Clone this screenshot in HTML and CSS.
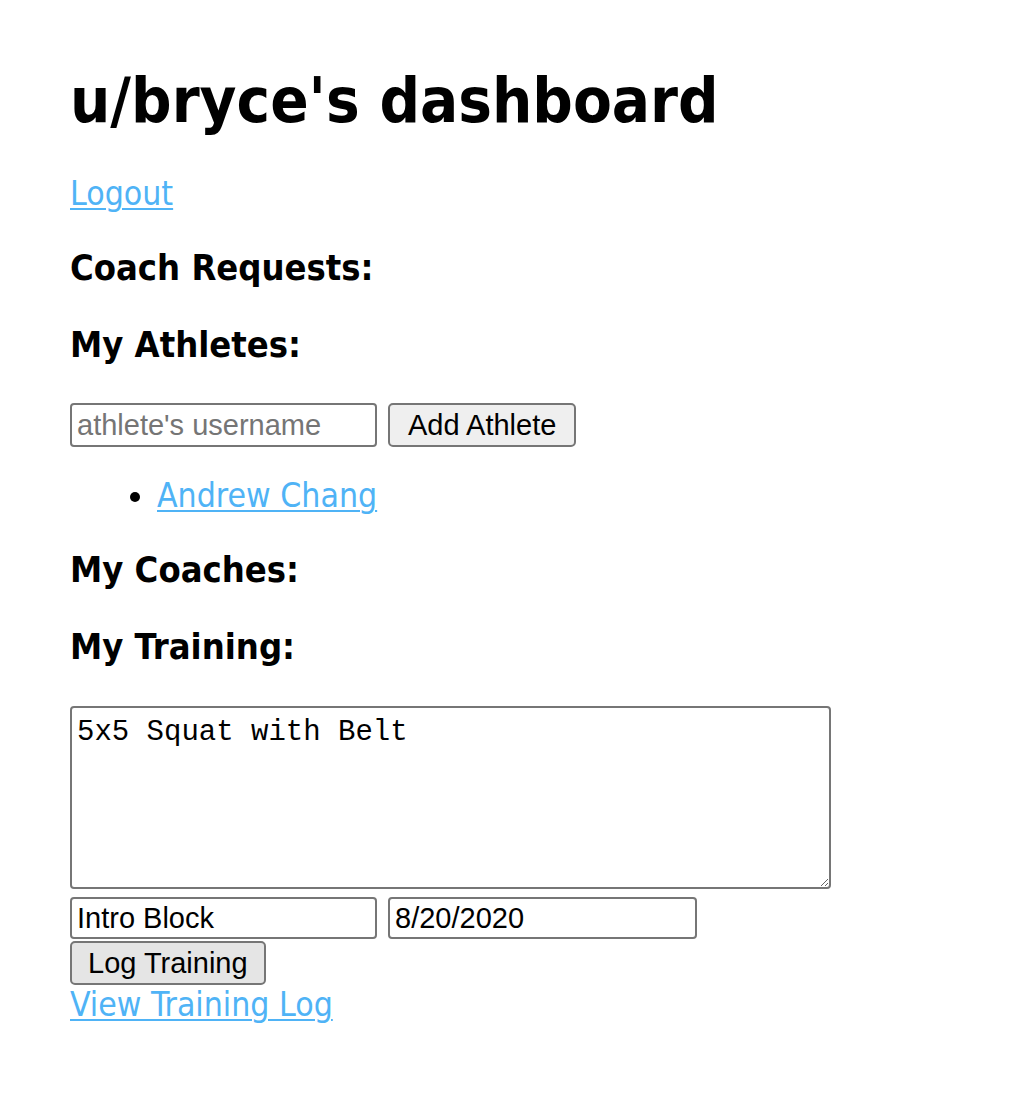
FILE: index.html
```html
<!DOCTYPE html>
<html lang="en">
<head>
<meta charset="utf-8">
<title>u/bryce's dashboard</title>
<link rel="stylesheet" href="styles.css">
</head>
<body>
<main class="page">
  <h1 class="title">u/bryce's dashboard</h1>
  <p class="text-line"><a class="link" href="#">Logout</a></p>
  <h3 class="section">Coach Requests:</h3>
  <h3 class="section">My Athletes:</h3>
  <form class="add-form">
    <input class="field field-tall" type="text" placeholder="athlete's username">
    <button class="btn" type="button">Add Athlete</button>
  </form>
  <ul class="athletes">
    <li class="text-line"><a class="link" href="#">Andrew Chang</a></li>
  </ul>
  <h3 class="section">My Coaches:</h3>
  <h3 class="section">My Training:</h3>
  <form class="training">
    <textarea class="notes">5x5 Squat with Belt</textarea>
    <div class="row">
      <input class="field field-short" type="text" value="Intro Block">
      <input class="field field-short field-date" type="text" value="8/20/2020">
    </div>
    <button class="btn btn-log" type="button">Log Training</button>
  </form>
  <p class="text-line log-line"><a class="link" href="#">View Training Log</a></p>
</main>
</body>
</html>
```

FILE: styles.css
```css
body {
  margin: 0;
  background: #fff;
  color: #000;
  font-family: "DejaVu Sans Condensed", "DejaVu Sans", sans-serif;
}

.page {
  padding: 63px 70px 0;
}

.title {
  font-size: 63px;
  line-height: 76px;
  font-weight: bold;
  margin: 0 0 35px;
}

.text-line {
  font-size: 33.5px;
  line-height: 40px;
  margin: 0 0 31px;
}

.link {
  color: #4fb3f6;
  text-decoration: underline;
  text-decoration-thickness: 2px;
  text-underline-offset: 3px;
}

.section {
  font-size: 36px;
  line-height: 46px;
  font-weight: bold;
  margin: 31px 0;
}

.add-form {
  display: flex;
  gap: 11px;
  margin: 35px 0 0;
}

.field {
  box-sizing: border-box;
  width: 307px;
  height: 42px;
  padding: 0 5px;
  border: 2px solid #767676;
  border-radius: 4px;
  background: #fff;
  color: #000;
  font-family: "Liberation Sans", Arial, sans-serif;
  font-size: 29px;
}

.field::placeholder {
  color: #757575;
}

.field-tall {
  height: 44px;
}

.field-date {
  width: 309px;
}

.btn {
  box-sizing: border-box;
  height: 44px;
  padding: 0 16px;
  border: 2px solid #767676;
  border-radius: 5px;
  background: #efefef;
  color: #000;
  font-family: "Liberation Sans", Arial, sans-serif;
  font-size: 29px;
}

.add-form .btn {
  padding: 0 18px;
}

.btn-log {
  background: #e5e5e5;
  margin-top: 2px;
}

.athletes {
  margin: 29px 0 31px;
  padding-left: 87px;
}

.athletes .text-line {
  margin: 0;
}

.training {
  display: flex;
  flex-direction: column;
  align-items: flex-start;
  margin: 36px 0 0;
}

.notes {
  box-sizing: border-box;
  width: 761px;
  height: 183px;
  padding: 8px 5px;
  border: 2px solid #767676;
  border-radius: 4px;
  font-family: "Liberation Mono", "Courier New", monospace;
  font-size: 29px;
  color: #000;
  margin: 0;
}

.row {
  display: flex;
  gap: 11px;
  margin-top: 8px;
}

.log-line {
  margin: 0;
}
```
